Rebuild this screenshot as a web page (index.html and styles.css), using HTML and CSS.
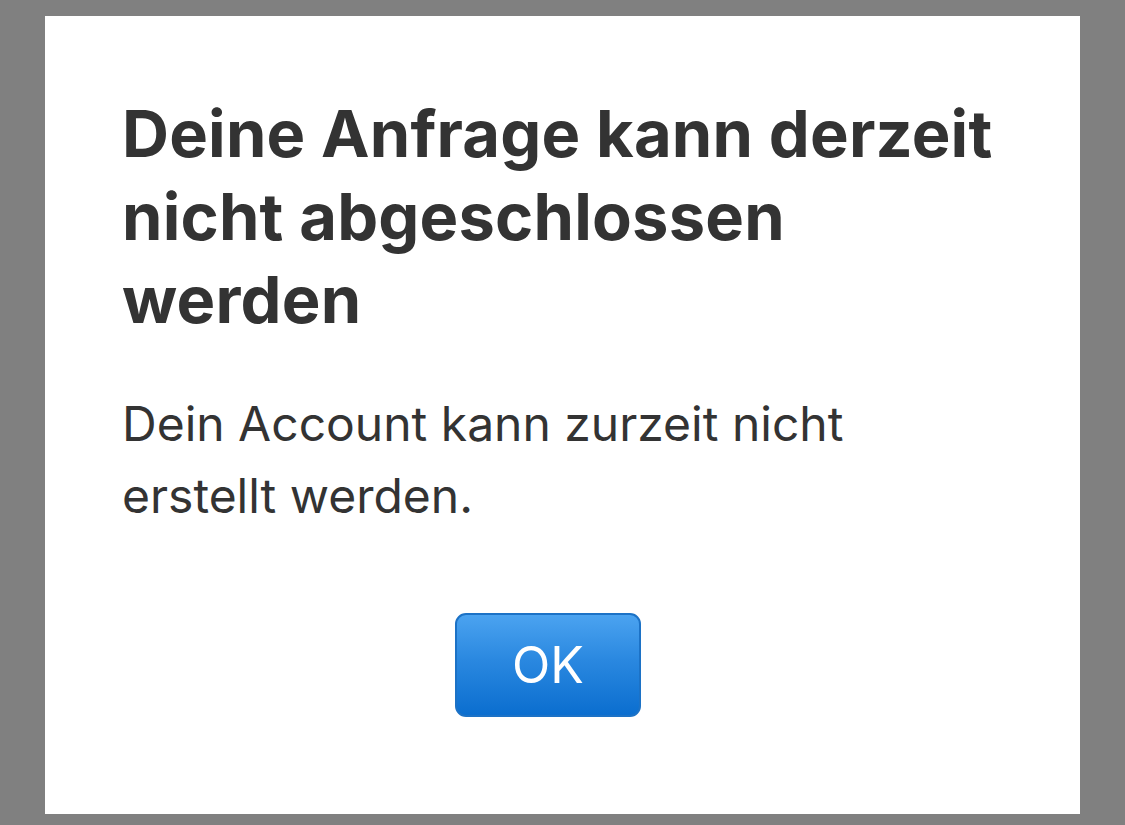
FILE: index.html
```html
<!DOCTYPE html>
<html lang="de">
<head>
<meta charset="utf-8">
<title>Fehler</title>
<link rel="stylesheet" href="styles.css">
</head>
<body>
<div class="dialog">
  <h1 class="title">Deine Anfrage kann derzeit nicht abgeschlossen werden</h1>
  <p class="message">Dein Account kann zurzeit nicht erstellt werden.</p>
  <div class="actions">
    <button class="ok-button" type="button">OK</button>
  </div>
</div>
</body>
</html>
```

FILE: styles.css
```css
html, body {
  margin: 0;
  padding: 0;
}

body {
  background: #808080;
  width: 1125px;
  height: 825px;
  padding: 16px 45px 11px 45px;
  box-sizing: border-box;
  font-family: Inter, "Noto Sans", "Liberation Sans", sans-serif;
}

.dialog {
  background: #ffffff;
  height: 798px;
  box-sizing: border-box;
  padding: 76px 77px 0 77px;
  display: flex;
  flex-direction: column;
}

.title {
  margin: 0;
  font-size: 65px;
  line-height: 83px;
  font-weight: 700;
  color: #333333;
  letter-spacing: 0.2px;
}

.message {
  margin: 47px 0 0 0;
  max-width: 780px;
  font-size: 48px;
  line-height: 72px;
  font-weight: 400;
  color: #333333;
  letter-spacing: 0;
}

.actions {
  margin-top: 81px;
  padding-left: 333px;
  display: flex;
}

.ok-button {
  width: 186px;
  height: 104px;
  box-sizing: border-box;
  border: 2px solid #1c72c6;
  border-radius: 11px;
  background: linear-gradient(to bottom, #4ba3f0 0%, #2a88e0 45%, #0b6ecf 100%);
  color: #ffffff;
  font-family: Inter, "Noto Sans", "Liberation Sans", sans-serif;
  font-size: 50px;
  font-weight: 400;
  line-height: 1;
  padding: 0;
}
```
